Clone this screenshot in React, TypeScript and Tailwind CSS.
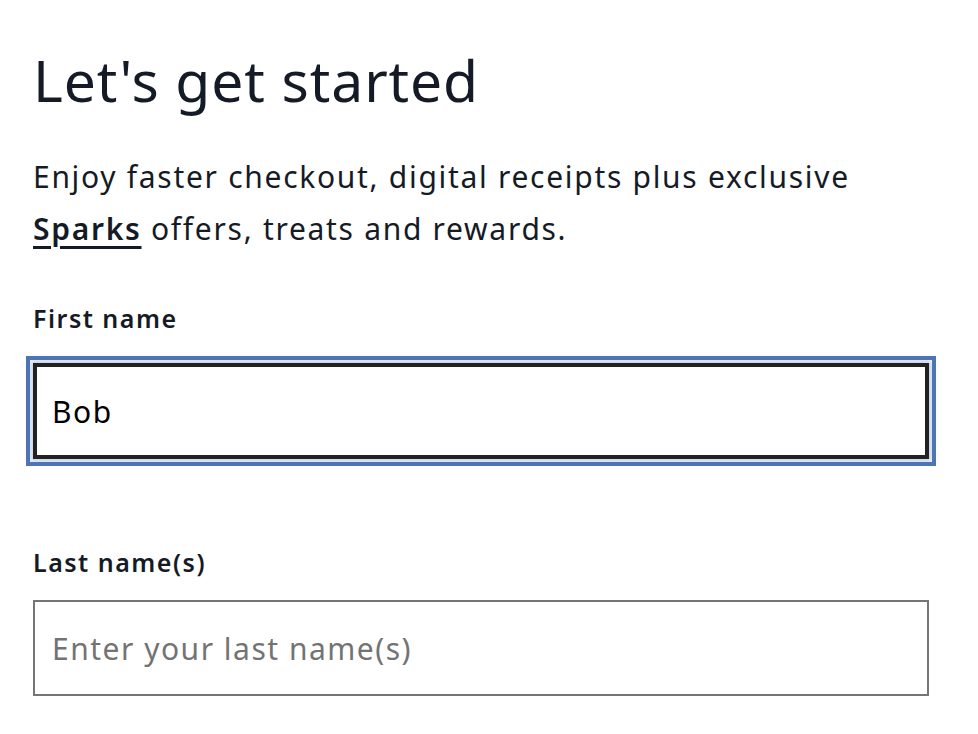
export default function App() {
  return (
    <div className="min-h-screen bg-white px-[33px] pt-[40px] text-[#151b26]" style={{ fontFamily: '"Noto Sans", "Open Sans", sans-serif' }}>
      <h1 className="text-[57px] leading-[80px] font-normal tracking-[0.9px]">Let's get started</h1>

      <p className="mt-[31px] text-[30px] leading-[52px] tracking-[1.7px]">
        Enjoy faster checkout, digital receipts plus exclusive
        <br />
        <a href="#" className="font-semibold underline underline-offset-[6px] decoration-[3px]">Sparks</a> offers, treats and rewards.
      </p>

      <div className="mt-[47px] w-[896px]">
        <label htmlFor="first" className="block text-[25px] font-semibold leading-[32px] tracking-[1.5px]">First name</label>
        <div className="mt-[29px] shadow-[0_0_6px_3px_rgba(79,117,183,0.35)] outline-4 outline-offset-[3px] outline-[#4e74b6]">
          <input
            id="first"
            defaultValue="Bob"
            className="block h-[96px] w-full border-4 border-[#222222] bg-white px-[15px] text-[30px] tracking-[1.5px] text-black outline-none"
          />
        </div>
      </div>

      <div className="mt-[87px] w-[896px]">
        <label htmlFor="last" className="block text-[25px] font-semibold leading-[32px] tracking-[1.5px]">Last name(s)</label>
        <input
          id="last"
          placeholder="Enter your last name(s)"
          className="mt-[22px] block h-[96px] w-full border-2 border-[#757575] bg-white px-[17px] text-[30px] tracking-[1.5px] text-black placeholder:text-[#737373] outline-none"
        />
      </div>
    </div>
  );
}
